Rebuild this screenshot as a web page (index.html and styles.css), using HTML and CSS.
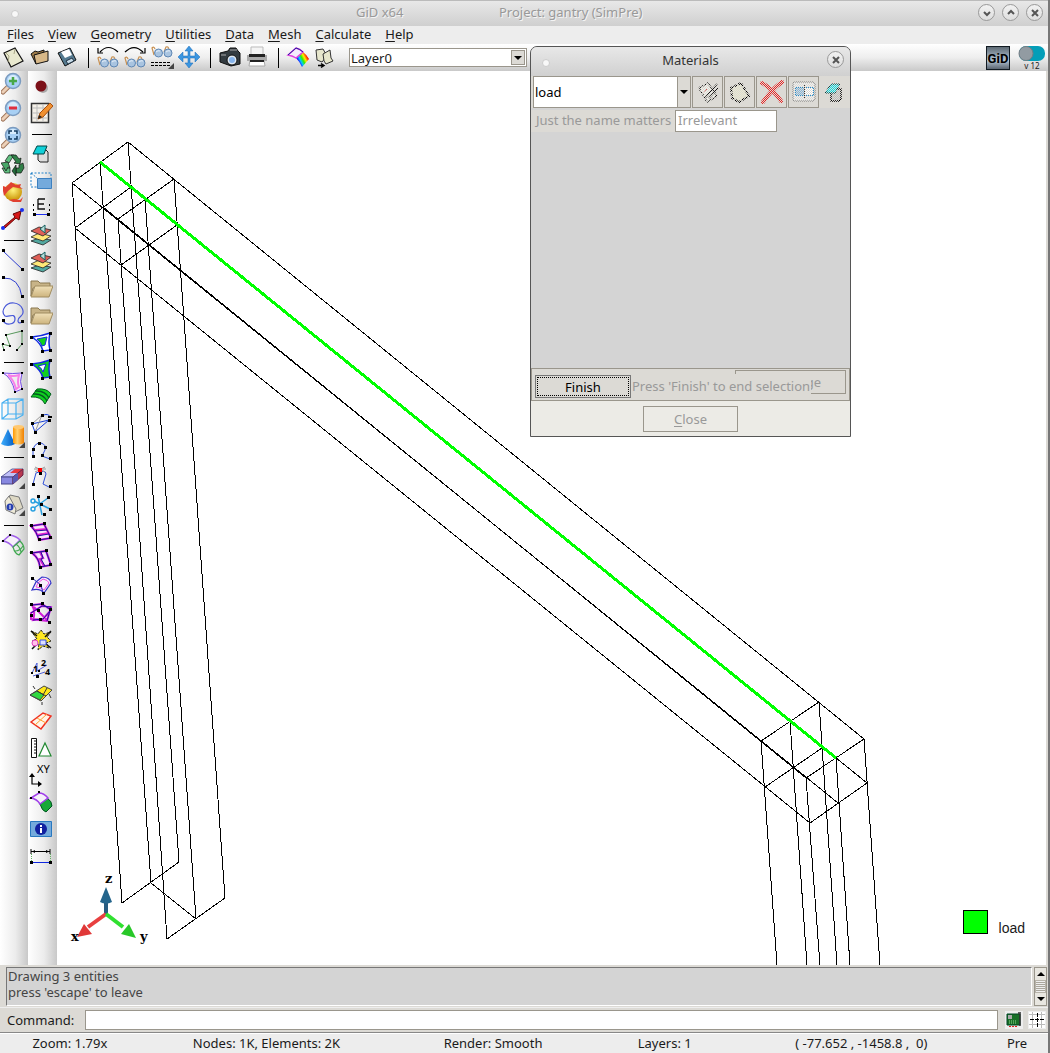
FILE: index.html
```html
<!DOCTYPE html>
<html lang="en">
<head>
<meta charset="utf-8">
<title>GiD x64 - Project: gantry (SimPre)</title>
<link rel="stylesheet" href="styles.css">
</head>
<body>
<svg class="defs" aria-hidden="true">
  <defs>
    <linearGradient id="blue" x1="0" x2="1"><stop offset="0" stop-color="#40b0ff"/><stop offset="1" stop-color="#0058c0"/></linearGradient>
    <linearGradient id="gold" x1="0" x2="1"><stop offset="0" stop-color="#ff9800"/><stop offset=".4" stop-color="#ffd070"/><stop offset="1" stop-color="#f08000"/></linearGradient>
    <linearGradient id="rainbow" x1="0" x2="1" y1="1" y2=".4"><stop offset=".3" stop-color="#20f"/><stop offset=".45" stop-color="#0cf"/><stop offset=".6" stop-color="#3e0"/><stop offset=".75" stop-color="#fe0"/><stop offset=".95" stop-color="#f00"/></linearGradient>
    <linearGradient id="steel" x2="0" y2="1"><stop offset="0" stop-color="#5a6670"/><stop offset=".6" stop-color="#b4c4d4"/><stop offset="1" stop-color="#56606c"/></linearGradient>
    <linearGradient id="tan" x2="0" y2="1"><stop offset="0" stop-color="#f0e0b8"/><stop offset="1" stop-color="#cdb47e"/></linearGradient>
    <radialGradient id="ball" cx=".5" cy=".4" r=".6"><stop offset="0" stop-color="#fff27a"/><stop offset="1" stop-color="#c89000"/></radialGradient>
    <pattern id="stipple" width="2" height="2" patternUnits="userSpaceOnUse"><path fill="#dcdad5" d="M0 0h1v1H0zM1 1h1v1H1z"/></pattern>
  </defs>
  <symbol id="glasses" viewBox="0 0 24 12">
    <path d="M4 9 2 2q2-2 3 1M14 6l2-5q2-1 3 2" fill="none" stroke="#c89050" stroke-width="1.2"/>
    <circle cx="8.500" cy="7" r="4" fill="#a9c4e0" stroke="#5f87b4"/><circle cx="18" cy="7" r="4" fill="#a9c4e0" stroke="#5f87b4"/>
    <path d="M6 6q2-2 4-1M16 6q2-2 4-1" fill="none" stroke="#e6f0fa"/>
  </symbol>
  <symbol id="corner" viewBox="0 0 24 24"><path d="M24 18v6h-6z" fill="#444"/></symbol>
  <symbol id="lens" viewBox="0 0 24 24">
    <path d="m8 14-6 6" stroke="#a0765a" stroke-width="5" stroke-linecap="round"/><path d="m8 14-6 6" stroke="#ecd0b8" stroke-width="3" stroke-linecap="round"/>
    <circle cx="12" cy="9" r="7.500" fill="#a8d0f4" stroke="#7c9cc0" stroke-width="1.500"/><path d="M7 8a5 5 0 0 1 10 0" fill="#d8ecfc"/>
  </symbol>
  <symbol id="layers" viewBox="0 0 24 24">
    <path d="m2 18 8-3 12 2-8 5z" fill="#52a8a0" stroke="#222" stroke-width=".8"/>
    <path d="m2 14 8-4 12 3-8 5z" fill="#ffe878" stroke="#222" stroke-width=".8"/>
    <path d="m2 8 8-4 12 3-8 6z" fill="#e06058" stroke="#222" stroke-width=".8"/>
    <path d="m11 6 5-4v8z" fill="#b8dcd8" stroke="#156060"/>
  </symbol>
  <symbol id="folder" viewBox="0 0 24 24">
    <path d="M2 4h7l2 2h10v5H4l-2 8z" fill="#c8b488" stroke="#8a7850"/><path d="M2 20 6 9h18l-4 11z" fill="url(#tan)" stroke="#a08c60"/>
  </symbol>
  <symbol id="page" viewBox="0 0 24 24"><path d="m3 8 11-5 8 13-12 6z" fill="#e9e9cf" stroke="#111" stroke-width="1.200"/><path d="m5 8 3 3-1 6M14 4l-1 5" stroke="#aaa888" fill="none"/></symbol>
</svg>

<div class="window">
  <header class="titlebar">
    <i class="dot"></i>
    <span class="app-name">GiD x64</span>
    <h1>Project: gantry (SimPre)</h1>
    <div class="window-buttons">
      <button class="round" aria-label="Minimize"><svg viewBox="0 0 16 16"><path d="m5 7 3 3 3-3"/></svg></button>
      <button class="round" aria-label="Maximize"><svg viewBox="0 0 16 16"><path d="m5 9 3-3 3 3"/></svg></button>
      <button class="round" aria-label="Close window"><svg viewBox="0 0 16 16"><path d="m5 5 6 6m0-6-6 6"/></svg></button>
    </div>
  </header>

  <nav class="menubar">
    <a href="#"><u>F</u>iles</a><a href="#"><u>V</u>iew</a><a href="#"><u>G</u>eometry</a><a href="#"><u>U</u>tilities</a><a href="#"><u>D</u>ata</a><a href="#"><u>M</u>esh</a><a href="#"><u>C</u>alculate</a><a href="#"><u>H</u>elp</a>
  </nav>

  <div class="toolbar">
    <button class="tool" aria-label="New"><svg viewBox="0 0 24 24"><use href="#page" width="24" height="24"/></svg></button>
    <button class="tool" aria-label="Open"><svg viewBox="0 0 24 24"><path d="m3 9 4-3 3 1 6-2v3L7 10l1 9z" fill="#a07c48" stroke="#111"/><path d="m6 10 14-4v10L8 19z" fill="#d8b888" stroke="#111"/></svg></button>
    <button class="tool" aria-label="Save"><svg viewBox="0 0 24 24"><path d="m3 8 12-5 6 12-11 6z" fill="#557a90" stroke="#111"/><path d="m6 7 8-3 3 6-7 3z" fill="#fff"/><path d="m11 16 6-3 2 3-6 3z" fill="#c8dce8" stroke="#234"/></svg></button>
    <i class="sep"></i>
    <button class="tool" aria-label="Previous view"><svg viewBox="0 0 24 24"><use href="#glasses" y="11" width="24" height="12"/><path d="M4 7q8-9 18 0M2 3v5h5" fill="none" stroke="#000" stroke-width="1.200"/></svg></button>
    <button class="tool" aria-label="Next view"><svg viewBox="0 0 24 24"><use href="#glasses" y="11" width="24" height="12"/><path d="M2 7q9-9 18 0m2-4v5h-5" fill="none" stroke="#000" stroke-width="1.200"/></svg></button>
    <button class="tool" aria-label="View list"><svg viewBox="0 0 24 24"><use href="#glasses" y="1" width="24" height="12"/><path d="M1 17.500h19M1 20.500h19" stroke="#000" stroke-dasharray="3 1"/><use href="#corner" width="24" height="24"/></svg></button>
    <button class="tool" aria-label="Pan"><svg viewBox="0 0 24 24"><path d="M12 1l4 5h-3v5h5V7l5 5-5 5v-4h-5v5h3l-4 5-4-5h3v-5H6v4l-5-5 5-5v4h5V6H8z" fill="#3c96e0" stroke="#1668b8" stroke-width=".5"/></svg></button>
    <i class="sep"></i>
    <button class="tool" aria-label="Snapshot"><svg viewBox="0 0 24 24"><path d="M2 8 10 6l2-3h6l2 3 2 2v11l-9 2-11-4z" fill="#333b40" stroke="#111"/><path d="M12 5h7M3 10h5" stroke="#aaa"/><circle cx="14" cy="15" r="5" fill="#dfe8f0" stroke="#111"/><circle cx="14" cy="15" r="3" fill="#86b4ec"/></svg></button>
    <button class="tool" aria-label="Print"><svg viewBox="0 0 24 24"><path d="M6 2h12v10H6z" fill="#f4f4f4" stroke="#bbb"/><path d="M2 10h20v6H2z" fill="#aaa"/><path d="M4 9h16v3H4z" fill="#222"/><path d="M5 15h14l1 6H4z" fill="#fff" stroke="#aaa"/><path d="M5 16h14" stroke="#222" stroke-width="2"/></svg></button>
    <i class="sep"></i>
    <button class="tool" aria-label="Render"><svg viewBox="0 0 24 24"><path d="m10 13 7-6q4 3 6 7l-7 8q-2-5-6-9z" fill="url(#rainbow)"/><path d="m2 10 8-7q4 1 7 4l-7 6Q7 11 2 10z" fill="#f4ecfc" stroke="#e040e0" stroke-width="1.500"/><path d="m2 10 8-7q4 1 7 4" fill="none" stroke="#2020a0"/></svg></button>
    <button class="tool" aria-label="Copy pages"><svg viewBox="0 0 24 24"><path d="m3 5 7-1 4 7-5 6-5-2z" fill="#e6e6cc" stroke="#333"/><path d="m10 9 7-4 1 8 2 3-7 3-2-3z" fill="#e6e6cc" stroke="#333"/><path d="M5 20.500h6m-3-2 3 2-3 2" stroke="#000" stroke-width="1.500" fill="none"/></svg></button>
    <label class="layer-pick"><select aria-label="Layer"><option>Layer0</option></select><i class="arrow-box"><i class="arrow"></i></i></label>
    <div class="brand">
      <svg class="gid" viewBox="0 0 24 24"><rect x=".5" y=".5" width="23" height="23" fill="url(#steel)" stroke="#111a22"/><text x="12" y="17" text-anchor="middle" class="gid-text">GiD</text></svg>
      <button class="version" aria-label="Switch version"><svg viewBox="0 0 28 24"><rect x="1" y="0" width="26" height="15" rx="7" fill="#049eb8"/><circle cx="8" cy="7.500" r="7" fill="#929ba2" stroke="#747d84"/></svg><span>v 12</span></button>
    </div>
  </div>

  <main class="workspace">
    <div class="side side-one">
      <button class="tool" aria-label="Zoom in"><svg viewBox="0 0 24 24"><use href="#lens" width="24" height="24"/><path d="M8 9h8M12 5v8" stroke="#48a848" stroke-width="2.500"/></svg></button>
      <button class="tool" aria-label="Zoom out"><svg viewBox="0 0 24 24"><use href="#lens" width="24" height="24"/><path d="M8 9h8" stroke="#e03040" stroke-width="3"/></svg></button>
      <button class="tool" aria-label="Zoom frame"><svg viewBox="0 0 24 24"><use href="#lens" width="24" height="24"/><path d="M8 8V5h3m2 0h3v3m0 2v3h-3m-2 0H8v-3" stroke="#10385c" stroke-width="1.500" fill="none"/></svg></button>
      <button class="tool" aria-label="Redraw"><svg viewBox="0 0 24 24"><g stroke="#111" stroke-width=".7"><path d="m4 8 4-6h5l-5 8z" fill="#60c080"/><path d="m10 2h5l3 4 2-1-1 6-6-1 2-1z" fill="#308048"/><path d="m18 12 4-2 1 5-3 5h-5v-5h3z" fill="#308048"/><path d="m15 12v11l-4-5z" fill="#246c3c"/><path d="M9 15v5H4l-3-5z" fill="#60c080"/><path d="m0 10 7-1 2 6-2-1-2 4-3-5z" fill="#48a868"/></g></svg></button>
      <button class="tool" aria-label="Render ball"><svg viewBox="0 0 24 24"><circle cx="12" cy="12" r="9" fill="url(#ball)"/><path d="m2 6 3 1 5-5 5 3 5-1-1 3 3 2-5-1-5-1-5 4-4 5-1-5zM8 20l5-1 6 1 3-3-2 5H12z" fill="#e04030"/></svg></button>
      <button class="tool" aria-label="Draw vector"><svg viewBox="0 0 24 24"><path d="m2 20 12-10-2-3 8-3-2 9-3-2-11 10z" fill="#d81818" stroke="#600"/><circle cx="2" cy="21" r="2" fill="#1830f0"/><circle cx="21" cy="3" r="2" fill="#1830f0"/></svg></button>
      <i class="sep"></i>
      <button class="tool" aria-label="Line"><svg viewBox="0 0 24 24"><path d="m2 3 19 18" stroke="#3040d0"/><path d="M1 1h3v3H1zM20 20h3v3h-3z"/></svg></button>
      <button class="tool" aria-label="Arc"><svg viewBox="0 0 24 24"><path d="M2 3q16-1 19 19" fill="none" stroke="#3040d0"/><path d="M1 1h3v3H1zM20 20h3v3h-3z"/></svg></button>
      <button class="tool" aria-label="Curve"><svg viewBox="0 0 24 24"><path d="M2 18c2 6 12 5 12-1 0-7-7-1-10-3C-1 9 5 0 13 1c9 1 11 10 7 13-5 4-3 9 1 6" fill="none" stroke="#4858d8" stroke-width="1.200"/><path d="M1 17h3v3H1zM20 18h3v3h-3z"/></svg></button>
      <button class="tool" aria-label="Polyline"><svg viewBox="0 0 24 24"><path d="m3 21-2-6 8 2L5 6l16-4v13l-5 6" fill="none" stroke="#58985c"/><path d="M4 5h2v2H4zM20 1h2v2h-2zM20 14h2v2h-2zM15 20h2v2h-2zM8 16h2v2H8zM1 14h2v2H1zM2 20h2v2H2z"/></svg></button>
      <i class="sep"></i>
      <button class="tool" aria-label="Surface"><svg viewBox="0 0 24 24"><path d="M2 3q10 1 19 0-3 9 0 16l-7 3Q11 8 2 3z" fill="#f8e8fc" stroke="#7850e8"/><path d="M7 5q5 2 11 0-2 8 0 12l-3 2Q13 10 7 5z" fill="#eee" stroke="#f880e8" stroke-width="2"/><path d="M1 2h2v2H1zM20 2h2v2h-2zM13 21h2v2h-2zM20 18h2v2h-2z"/></svg></button>
      <button class="tool" aria-label="Volume"><svg viewBox="0 0 24 24"><path d="m1 6 6-4h15v16l-7 4H1zm0 0h14v16M15 6l7-4M7 2v15h15M7 17l-6 5" fill="none" stroke="#48b0f0" stroke-width="1.200"/></svg></button>
      <button class="tool" aria-label="Solids"><svg viewBox="0 0 24 24"><path d="m7 5 7 15q-7 4-14 0z" fill="url(#blue)"/><path d="M12 3v16q6 3 11 0V3z" fill="url(#gold)"/><ellipse cx="17.500" cy="3" rx="5.500" ry="2" fill="#ffc870"/><use href="#corner" width="24" height="24"/></svg></button>
      <i class="sep"></i>
      <button class="tool" aria-label="Delete"><svg viewBox="0 0 24 24"><path d="m0 12 11-8h11l-10 8z" fill="#c0c0f8" stroke="#448" stroke-width=".8"/><path d="m14 4-5 4h8l5-4z" fill="#e83840"/><path d="M0 12h12v7H0z" fill="#8888e0" stroke="#448"/><path d="m12 12 10-8v6l-10 9z" fill="#b83850" stroke="#624"/><path d="m12 12 5-4v7l-5 4z" fill="#5858b0"/><use href="#corner" width="24" height="24"/></svg></button>
      <button class="tool" aria-label="List"><svg viewBox="0 0 24 24"><path d="m9 3 9 2 4 11-8 4-8-10z" fill="#ddd8c4" stroke="#777"/><path d="m4 9 4-5 7 13-1 5-9-4z" fill="#eeead8" stroke="#777"/><circle cx="9" cy="15" r="3.500" fill="#2840b0"/><path d="M9 13v4" stroke="#fff"/><use href="#corner" width="24" height="24"/></svg></button>
      <i class="sep"></i>
      <button class="tool" aria-label="Generate mesh"><svg viewBox="0 0 24 24"><path d="m2 8 7-6q6 1 10 5l-7 7Q8 9 2 8z" fill="#f6f0fa" stroke="#a060e8" stroke-width="1.500"/><path d="m12 14 7-6q4 4 4 8l-5 6q-4-1-6-8zM15 11q4 3 5 8M14 18q5 0 8-5" fill="none" stroke="#40a850" stroke-width="1.200"/><path d="M1 7h2v2H1zM8 1h2v2H8z"/></svg></button>
    </div>

    <div class="side side-two">
      <button class="tool" aria-label="Point"><svg viewBox="0 0 24 24"><circle cx="14" cy="14" r="5" fill="#aaa"/><circle cx="12" cy="12" r="5.500" fill="#7c1018"/></svg></button>
      <button class="tool" aria-label="Edit notes"><svg viewBox="0 0 24 24"><path d="M2.500 2.500h17v19h-17z" fill="#f4f0e8" stroke="#333" stroke-width="1.500"/><path d="M3 7h16M3 12h16M3 17h16M8 3v18M14 3v18" stroke="#bbb"/><path d="m9 18 2-6L21 2l3 3-10 11z" fill="#f09030" stroke="#a85010"/><path d="m9 18 1-4 3 2z" fill="#222"/></svg></button>
      <i class="sep"></i>
      <button class="tool" aria-label="Layer"><svg viewBox="0 0 24 24"><path d="M9 8h8l2 2v10h-8l-2-2z" fill="#ddd" stroke="#222"/><path d="m4 12 4-8h10l-3 8z" fill="#10d0d8" stroke="#044"/></svg></button>
      <button class="tool" aria-label="Select box"><svg viewBox="0 0 24 24"><path d="M2 4h20v14M2 4v14h6M2 4l6 5" fill="none" stroke="#2080c8" stroke-dasharray="2 1.500"/><path d="M8.500 9.500h14v10h-14z" fill="#74aadc" stroke="#3c80c0"/></svg></button>
      <button class="tool" aria-label="Label entities"><svg viewBox="0 0 24 24"><path d="M9 3v10h7M9 3h7M9 8h6" fill="none" stroke="#111" stroke-width="1.300"/><path d="M5 18.500h14" stroke="#2030f0"/><path d="M4 17h3v3H4zM18 17h3v3h-3zM4 13h1v2H4zM20 13h1v2h-1zM4 8h1v2H4zM20 8h1v2h-1z"/></svg></button>
      <button class="tool" aria-label="Layers to front"><svg viewBox="0 0 24 24"><use href="#layers" width="24" height="24"/></svg></button>
      <button class="tool" aria-label="Layers to back"><svg viewBox="0 0 24 24"><use href="#layers" width="24" height="24"/></svg></button>
      <button class="tool" aria-label="Open layer"><svg viewBox="0 0 24 24"><use href="#folder" width="24" height="24"/></svg></button>
      <button class="tool" aria-label="Open group"><svg viewBox="0 0 24 24"><use href="#folder" width="24" height="24"/></svg></button>
      <button class="tool" aria-label="Inner surface"><svg viewBox="0 0 24 24"><path d="M3 6q10-1 18-4-2 9 0 17l-7 1Q12 12 3 6z" fill="#fff" stroke="#1028e0" stroke-width="1.500"/><path d="m8 8 10-2-2 8-3 1q-1-4-5-7z" fill="#10d020" stroke="#1028e0"/><path d="M1 5h3v3H1zM20 1h3v3h-3zM12 19h3v3h-3zM20 18h3v3h-3z"/></svg></button>
      <button class="tool" aria-label="Outer surface"><svg viewBox="0 0 24 24"><path d="M3 6q10-1 18-4-2 9 0 17l-7 1Q12 12 3 6z" fill="#10d020" stroke="#1028e0" stroke-width="1.500"/><path d="m9 8 8-2-3 8q-2-5-5-6z" fill="#fff" stroke="#1028e0"/><path d="M1 5h3v3H1zM20 1h3v3h-3zM12 19h3v3h-3zM20 18h3v3h-3z"/></svg></button>
      <button class="tool" aria-label="Parallel surfaces"><svg viewBox="0 0 24 24"><path d="m2 12 6-8q10-1 14 5l-6 10Q12 11 2 12z" fill="#10d020" stroke="#045c20"/><path d="M4 9q10-1 14 7M6 6q10-1 14 7" fill="none" stroke="#045c20" stroke-width="1.500"/></svg></button>
      <button class="tool" aria-label="Rotate lines"><svg viewBox="0 0 24 24"><path d="M3 12 20 8 6 20zM13 4q6-4 9 2" fill="none" stroke="#1840d8"/><path d="m3 12 10-9-7 17" fill="none" stroke="#999"/><path d="M2 10h3v3H2zM5 19h3v3H5zM19 7h3v3h-3zM12 2h3v3h-3zM19 4h4v2h-4z"/></svg></button>
      <button class="tool" aria-label="Join lines"><svg viewBox="0 0 24 24"><path d="M4 18V10q3-7 8-6 6 2 4 7l-3 6 8 3" fill="none" stroke="#3050d8"/><path d="M3 16h3v3H3zM3 9h3v3H3zM9 3h3v3H9zM15 7h3v3h-3zM12 15h3v3h-3zM20 18h3v3h-3z"/></svg></button>
      <button class="tool" aria-label="Move end point"><svg viewBox="0 0 24 24"><path d="m4 18 3-11q10-4 10 1l-3 10 6 3" fill="none" stroke="#3050d8"/><path d="M5 3h12M6 1l10 5M6 6l10-5" stroke="#999"/><path d="M9 2h4v4H9z" fill="#f00"/><path d="M3 17h3v3H3zM10 6h3v3h-3zM20 19h3v3h-3z"/></svg></button>
      <button class="tool" aria-label="Split"><svg viewBox="0 0 24 24"><path d="m5 8 16 8M5 15l14-10M9 3l4 19" stroke="#28a0e0" stroke-width="1.500"/><circle cx="4" cy="8" r="2" fill="none" stroke="#28a0e0" stroke-width="1.500"/><circle cx="4" cy="16" r="2" fill="none" stroke="#28a0e0" stroke-width="1.500"/><path d="M8 2h3v3H8zM18 3h3v3h-3zM11 10h3v3h-3zM20 15h3v3h-3zM14 20h3v3h-3z"/></svg></button>
      <button class="tool" aria-label="Divide surface"><svg viewBox="0 0 24 24"><path d="m2 6 13-2 7 14-12 2Q8 12 2 6zm4 4 12-1M8 15l12-2" fill="#f6e8fa" stroke="#e020d0" stroke-width="2.200"/><path d="m2 6 13-2 7 14-12 2Q8 12 2 6zm4 5 12-1M8 16l12-2" fill="none" stroke="#2010a0"/><path d="M1 4h3v3H1zM14 2h3v3h-3zM20 16h3v3h-3zM9 18h3v3H9z"/></svg></button>
      <button class="tool" aria-label="Divide near point"><svg viewBox="0 0 24 24"><path d="m3 6 14-2 5 14-11 2Q10 11 3 6zM11 5l3 6-3 1 4 7" fill="#f6e8fa" stroke="#d020d0" stroke-width="2.200"/><path d="m3 6 14-2 5 14-11 2Q10 11 3 6zM12 5l2 6-2 1 4 7" fill="none" stroke="#2010a0"/><path d="M1 4h3v3H1zM16 2h3v3h-3zM20 16h3v3h-3zM10 19h3v3h-3z"/></svg></button>
      <button class="tool" aria-label="Edit NURBS surface"><svg viewBox="0 0 24 24"><path d="m7 8 6-5q8 0 9 6l-7 10Q11 14 3 16z" fill="#f6f0fa" stroke="#3030c8" stroke-width="1.200"/><path d="m9 9 5-4q5 1 6 4l-5 7q-3-3-8-3z" fill="none" stroke="#f050e0"/><path d="M3 4l9 7 2 8" fill="none" stroke="#3030c8"/><path d="M2 3h3v3H2zM10 10h3v3h-3zM13 18h3v3h-3z"/></svg></button>
      <button class="tool" aria-label="Intersect surfaces"><svg viewBox="0 0 24 24"><path d="m3 4 10-1 9 6-8 9-10 1q3-8-1-15zM2 12l11-7 9 1-4 14-16-2zM5 6l14 14" fill="none" stroke="#d020d8" stroke-width="2"/><path d="m3 4 10-1 9 6-8 9-10 1M2 12l11-7 9 1-4 14" fill="none" stroke="#2010a0"/><path d="M1 2h3v3H1zM12 1h3v3h-3zM1 13h3v3H1zM10 17h3v3h-3zM19 20h3v3h-3zM20 7h3v3h-3zM8 8h3v3H8z"/></svg></button>
      <button class="tool" aria-label="Explode volumes"><svg viewBox="0 0 24 24"><path d="m2 3 7 3 3-4 3 4 7-2-4 5 4 4-5 2 3 5-6-2-5 4 1-6-7-3 5-2z" fill="#ffe820" stroke="#222" stroke-dasharray="3 1"/><path d="m2 3 6 5M22 3l-6 6M3 21l5-5M22 20l-5-4" stroke="#111" stroke-width="1.500"/><circle cx="6" cy="15" r="3" fill="#ffc0e8" stroke="#e040c0"/><path d="M11 12h6v5h-6z" fill="#dde0ff" stroke="#3850e0"/></svg></button>
      <button class="tool" aria-label="Renumber"><svg viewBox="0 0 24 24"><path d="M3 18 8 8v8l10-6M4 21l12-4" fill="none" stroke="#5060d8"/><text x="12" y="11" class="digit">2</text><text x="4" y="17" class="digit">1</text><text x="16" y="20" class="digit">4</text><path d="M2 17h2v2H2zM9 15h2v2H9zM7 20h3v3H7z"/></svg></button>
      <button class="tool" aria-label="Swap normals"><svg viewBox="0 0 24 24"><path d="m1 13 14-9 8 4-11 11z" fill="#ffe818" stroke="#444"/><path d="m1 13 7-4 7 4-4 5z" fill="#30d840" stroke="#444"/><path d="m8 9 9 5M14 13l4-7M6 7l-2-3M20 12l2 4M13 20v3" stroke="#333"/></svg></button>
      <button class="tool" aria-label="Surface patch"><svg viewBox="0 0 24 24"><path d="m2 13 12-9 8 3-10 13z" fill="#fff4e8" stroke="#f03020" stroke-width="1.500"/><path d="m8 9 9 5M6 16l12-11" stroke="#ffa030"/></svg></button>
      <button class="tool" aria-label="Measure"><svg viewBox="0 0 24 24"><path d="M2.500 2.500h5v19h-5zM5 5h2M5 8h2M5 11h2M5 14h2M5 17h2" fill="#fff" stroke="#111"/><path d="m16 7 6 13H10z" fill="#fff" stroke="#208830" stroke-width="1.200"/></svg></button>
      <button class="tool" aria-label="Coordinates"><svg viewBox="0 0 24 24"><path d="M3 12v9h9" fill="none" stroke="#000" stroke-width="1.200"/><path d="m0 14 3-4 3 4zM9 18l4 3-4 3z"/><text x="8" y="10" class="axes-text">XY</text></svg></button>
      <button class="tool" aria-label="Surface render"><svg viewBox="0 0 24 24"><path d="m11 14 7-6q5 3 5 8l-6 6q-4-1-6-8z" fill="#18a838" stroke="#052"/><path d="m2 8 8-5q5 0 9 5l-8 6Q8 9 2 8z" fill="#f6f0fa" stroke="#a040e8" stroke-width="1.500"/><path d="M1 7h2v2H1zM9 1h2v2H9z"/></svg></button>
      <button class="tool" aria-label="Information"><svg viewBox="0 0 24 24"><path d="M1.500 4.500h21v15h-21z" fill="#74aadc" stroke="#2878c0"/><circle cx="12" cy="12" r="6" fill="#1020a0"/><path d="M11 11h2v5h-2zM11 8h2v2h-2z" fill="#fff"/></svg></button>
      <button class="tool" aria-label="Distance"><svg viewBox="0 0 24 24"><path d="M2 7.500h19M2 5v5M21 5v5" stroke="#000"/><path d="M2 18.500h19" stroke="#1028e0"/><path d="M3 7.500 6 6v3zM20 7.500 17 6v3zM1 17h3v3H1zM20 17h3v3h-3z"/><path d="M2.500 10v7M21.500 10v7" stroke="#60b060" stroke-dasharray="1 1"/></svg></button>
    </div>

    <section class="viewport">
      <svg class="model" viewBox="57 71 989 894" preserveAspectRatio="xMinYMin slice">
        <g class="wire">
          <path d="M128 142 864 739M72 183l766 620M75 228l735 595M131 187l736 596"/>
          <path d="m103 207 703 571"/>
          <path d="m72 183 56-41M118 219l56-40M75 228l56-41M121 265l56-40"/>
          <path d="m761 741 58-39M765 787l57-39M806 778l58-39M810 823l57-40"/>
          <path d="m72 183 50 720M100 162l51 721M128 142l51 720M118 219l49 720M145 199l51 720M174 179l51 719"/>
          <path d="m122 903 57-41M167 939l58-41M151 883l45 36"/>
          <path d="m761 741 16 224M790 721l17 244M806 778l14 187M819 702l18 263M836 758l14 207M864 739l16 226"/>
        </g>
        <path class="load-line" d="m100 162 736 596"/>
        <g class="triad">
          <path d="M106 914V895" stroke="#285c80" stroke-width="4"/><path d="m106 887 6 15q-6 3-12 0z" fill="#24658c"/>
          <path d="m106 914-18 13" stroke="#e84040" stroke-width="4"/><path d="m77 937 7-13 8 10z" fill="#e03838"/>
          <path d="m106 914 17 13" stroke="#30e030" stroke-width="4"/><path d="m136 938-7-14-8 10z" fill="#28c828"/>
          <text x="105" y="883">z</text><text x="71" y="941">x</text><text x="140" y="941">y</text>
        </g>
      </svg>
      <div class="legend"><i class="swatch"></i><span>load</span></div>
    </section>
  </main>

  <section class="messages">
    <div class="log">Drawing 3 entities<br>press 'escape' to leave</div>
    <div class="scrollbar"><button aria-label="Scroll up"><i class="arrow up"></i></button><i class="thumb"></i><button aria-label="Scroll down"><i class="arrow"></i></button></div>
  </section>

  <div class="command">
    <label for="command">Command:</label>
    <input id="command" type="text">
    <button class="mini" aria-label="Process"><svg viewBox="0 0 18 18"><path d="M2 3h13v11H2z" fill="#187028" stroke="#042"/><path d="M13 2h3M15 3v12" stroke="#333" stroke-width="1.500"/><path d="M3 4h4v4H3z" fill="#aaa"/><path d="M4 10h8M4 12h8" stroke="#90d890" stroke-dasharray="1 1"/><path d="M4 15.500h9" stroke="#e02020" stroke-dasharray="2 1"/></svg></button>
    <button class="mini" aria-label="Grid"><svg viewBox="0 0 18 18" shape-rendering="crispEdges"><path d="M1 1h16v16H1z" fill="#fff"/><path d="M1 3.500h16M1 13.500h16M4.500 1v16M13.500 1v16" stroke="#bbb"/><path d="M2 8.500h14M9 2v14" stroke="#000" stroke-dasharray="4 1"/></svg></button>
  </div>

  <footer class="status">
    <span>Zoom: 1.79x</span><span>Nodes: 1K, Elements: 2K</span><span>Render: Smooth</span><span>Layers: 1</span><span>( -77.652 , -1458.8 ,&nbsp; 0)</span><span>Pre</span>
  </footer>
</div>

<div class="dialog" role="dialog" aria-labelledby="dialog-title">
  <header class="dialog-title">
    <i class="dot"></i><h2 id="dialog-title">Materials</h2>
    <button class="round" aria-label="Close dialog"><svg viewBox="0 0 16 16"><path d="m5 5 6 6m0-6-6 6"/></svg></button>
  </header>
  <div class="material-bar">
    <label class="material-pick"><select aria-label="Material"><option>load</option></select><i class="arrow-box"><i class="arrow"></i></i></label>
    <button class="material-tool" aria-label="Assign" disabled><svg viewBox="0 0 24 24"><path d="m3 8 9-5 9 13-10 6z" fill="#f2f2ea" stroke="#111" stroke-width="1.500" stroke-dasharray="2 1"/><path d="m8 8 4 4M7 12l4-3" stroke="#c44"/><path d="M21 4 9 18M22 8l-9 10" stroke="#111" stroke-width="1.500"/><path class="stipple" d="M0 0h24v24H0z"/></svg></button>
    <button class="material-tool" aria-label="New material" disabled><svg viewBox="0 0 24 24"><path d="m3 8 10-5 8 13-10 6-7-4z" fill="#e9e9cf" stroke="#000" stroke-width="2" stroke-dasharray="3 1"/><path class="stipple" d="M0 0h24v24H0z"/></svg></button>
    <button class="material-tool" aria-label="Delete material" disabled><svg viewBox="0 0 24 24"><path d="M2 3q10 5 19 18M22 2Q12 9 3 22" fill="none" stroke="#e82020" stroke-width="4" stroke-linecap="round"/><path class="stipple" d="M0 0h24v24H0z"/></svg></button>
    <button class="material-tool" aria-label="Rename material" disabled><svg viewBox="0 0 24 24"><rect x="1" y="2" width="22" height="19" rx="2" fill="#eee" stroke="#777"/><path d="M3.500 7.500h18v8h-18z" fill="#fff" stroke="#208cd0"/><path d="M4 8h8v7H4z" fill="#80b4dc"/><path d="M12.500 5v13" stroke="#333"/><path class="stipple" d="M0 0h24v24H0z"/></svg></button>
    <button class="material-tool flat" aria-label="Import material" disabled><svg viewBox="0 0 24 24"><path d="M9 9h10v10l-2 2H9z" fill="#bbb" stroke="#000" stroke-width="1.500"/><path d="m3 13 6-9h9l-5 9z" fill="#00e0e8" stroke="#033"/><path class="stipple" d="M0 0h24v24H0z"/></svg></button>
  </div>
  <div class="property"><label for="name-value">Just the name matters</label><input id="name-value" type="text" value="Irrelevant" disabled></div>
  <div class="actions">
    <button class="finish">Finish</button>
    <span class="hint">Press 'Finish' to end selection</span>
    <button class="covered" disabled>ge</button>
  </div>
  <div class="closing"><button class="close" disabled><u>C</u>lose</button></div>
</div>
</body>
</html>
```
FILE: styles.css
```css
* { box-sizing: border-box; }

body {
  margin: 0;
  font: 13px/16px "Noto Sans", sans-serif;
  color: #1a1a1a;
  background: #dcdad5;
}

button, input, select { font: inherit; color: inherit; margin: 0; padding: 0; border-radius: 0; }
button { background: none; border: 0; }
a { color: inherit; text-decoration: none; }
h1, h2 { margin: 0; font: inherit; }
u { text-underline-offset: 2px; }
.defs { position: absolute; width: 0; height: 0; }

.window {
  display: flex;
  flex-direction: column;
  min-height: 100vh;
  border-right: 2px solid #777;
}

/* Title bar */
.titlebar {
  display: grid;
  grid-template-columns: 356px 143px 1fr auto;
  align-items: center;
  height: 26px;
  padding: 0 5px 3px 0;
  background: linear-gradient(#e8e8e8, #cfcfcf);
  border-top: 1px solid #bbb;
  color: #999;
  text-shadow: 1px 1px 0 #f4f4f4;
}
.dot { width: 8px; height: 8px; border-radius: 50%; background: #f8f8f8; border: 1px solid #ccc; }
.titlebar .dot { margin: 4px 0 0 11px; }
.window-buttons { display: flex; gap: 7px; }
.round {
  width: 17px;
  height: 17px;
  border-radius: 50%;
  background: linear-gradient(#f2f2f2, #dedede);
  border: 1px solid #999;
  display: grid;
  place-items: center;
}
.round svg { width: 16px; height: 16px; fill: none; stroke: #555; stroke-width: 2; }

/* Menu */
.menubar { display: flex; gap: 14px; padding: 0 7px; height: 18px; background: #ededed; }

/* Toolbars */
.toolbar {
  display: flex;
  align-items: center;
  height: 27px;
  background: linear-gradient(#fff, #eee 50%, #c9c9c9);
}
.tool { width: 27px; height: 27px; padding: 1px; flex: none; display: grid; place-items: start; }
.tool svg { width: 24px; height: 24px; }
.sep { display: grid; place-items: center; flex: none; }
.toolbar .sep { width: 14px; height: 27px; }
.toolbar .sep::before { content: ""; width: 1px; height: 20px; background: #000; }
.side .sep::before { content: ""; width: 20px; height: 1px; background: #000; }

.layer-pick, .material-pick {
  display: flex;
  background: #fff;
  border: 1px solid #9a968c;
}
.layer-pick { width: 178px; height: 19px; margin-left: 10px; }
.layer-pick .arrow-box { margin: 1px; }
select { appearance: none; flex: 1; min-width: 0; border: 0; background: #fff; padding-left: 1px; }
.arrow-box { display: grid; place-items: center; background: #dcdad5; border: 1px solid #9a968c; width: 14px; }
.arrow { border: 4px solid transparent; border-top-color: #000; border-bottom-width: 0; }
.arrow.up { border: 4px solid transparent; border-bottom-color: #000; border-top-width: 0; }
.brand { display: flex; gap: 8px; margin-left: auto; padding-right: 2px; align-items: center; }
.gid { width: 24px; height: 24px; }
.gid-text { font: bold 13px "Liberation Sans Narrow", "Roboto", sans-serif; }
.version { display: flex; flex-direction: column; align-items: center; width: 28px; height: 24px; font-size: 8px; line-height: 8px; }
.version svg { width: 28px; height: 24px; margin-bottom: -8px; flex: none; }

.workspace { display: flex; flex: 1; background: #fff; }
.side { display: flex; flex-direction: column; flex: none; background: linear-gradient(90deg, #fff, #ececec 55%, #c8c8c8); }
.side-one { width: 28px; }
.side-two { width: 29px; padding-top: 2px; }
.side .sep { height: 14px; width: 27px; }
.digit { font: bold 9px "Noto Sans", sans-serif; }
.axes-text { font: 11px "Noto Sans", sans-serif; }

/* Drawing area */
.viewport { position: relative; flex: 1; min-width: 0; border-right: 2px solid #dcdad5; }
.model { position: absolute; inset: 0; width: 100%; height: 100%; }
.wire { fill: none; stroke: #000; stroke-width: 1; shape-rendering: crispEdges; }
.load-line { stroke: #0f0; stroke-width: 3; shape-rendering: crispEdges; }
.triad text { font: bold 13px "DejaVu Serif", serif; }
.legend {
  position: absolute;
  right: 21px;
  bottom: 29px;
  display: flex;
  gap: 11px;
  align-items: flex-end;
  font: 14px/16px "Liberation Sans", sans-serif;
}
.swatch { width: 25px; height: 24px; margin-bottom: 2px; background: #0f0; border: 1px solid #000; }

/* Messages, command line and status */
.messages { display: flex; gap: 2px; height: 43px; padding: 2px 1px 1px 6px; border-bottom: 1px solid #eee; }
.log { flex: 1; padding: 0 1px; background: #d4d4d4; color: #444; border: 1px solid #fff; border-top-color: #777; border-left-color: #777; }
.scrollbar { display: flex; flex-direction: column; width: 13px; background: #b8b4aa; border: 1px solid #9a968c; }
.scrollbar button { height: 12px; display: grid; place-items: center; background: #e8e6e0; flex: none; }
.thumb { flex: 1; margin: 1px; background: repeating-linear-gradient(#eee 0 1px, #aaa69c 1px 2px); }
.command { display: flex; align-items: center; height: 25px; padding: 0 2px 0 7px; border-bottom: 1px solid #888; }
.command label { width: 78px; }
.command input { flex: 1; min-width: 0; height: 20px; background: #fff; border: 1px solid #9a968c; margin-right: 7px; }
.mini { width: 18px; height: 18px; background: #eee; }
.mini + .mini { margin-left: 5px; }
.mini svg { display: block; width: 18px; height: 18px; }
.status { display: grid; grid-template-columns: 140fr 254fr 200fr 144fr 250fr 62fr; height: 20px; text-align: center; background: #ededed; border-top: 1px solid #fff; line-height: 18px; white-space: nowrap; }

/* Materials dialog */
.dialog {
  position: absolute;
  left: 530px;
  top: 46px;
  width: 321px;
  height: 391px;
  display: flex;
  flex-direction: column;
  background: #d4d4d4;
  border: 1px solid #555;
  border-radius: 7px 7px 0 0;
  color: #000;
}
.dialog-title {
  display: grid;
  grid-template-columns: 19px 1fr 24px;
  align-items: center;
  height: 29px;
  padding: 0 6px 4px 11px;
  text-align: center;
  color: #333;
  background: linear-gradient(#e8e8e8, #d0d0d0);
  border-radius: 6px 6px 0 0;
}
.dialog-title .dot { margin-top: 6px; }
.dialog-title .round { justify-self: end; }
.material-bar { display: flex; gap: 1px; padding: 0 2px; height: 32px; background: #dcdad5; }
.material-pick { width: 159px; }
.material-pick .arrow-box { border-width: 0 0 0 1px; width: 13px; }
.material-tool { width: 31px; display: grid; place-items: center; background: #dcdad5; border: 1px solid #9a968c; }
.material-tool.flat { border-color: transparent; width: 28px; }
.material-tool svg { width: 24px; height: 24px; }
.stipple { fill: url(#stipple); }
.property { display: flex; height: 22px; margin-top: 2px; color: #999; }
.property label { width: 144px; padding: 2px 0 0 5px; background: #dcdad5; white-space: nowrap; }
.property input { width: 102px; padding: 0 2px 2px; background: #fff; border: 1px solid #9a968c; }
.actions { position: relative; display: flex; align-items: flex-end; height: 33px; margin-top: auto; padding: 0 3px 2px; background: #dcdad5; border: 1px solid #9a968c; }
.finish { width: 96px; height: 23px; border: 1px solid #777; background: #dcdad5; outline: 1px dotted #000; outline-offset: -3px; }
.hint { position: relative; z-index: 1; width: 180px; height: 24px; padding-left: 1px; line-height: 24px; color: #999; background: #dcdad5; white-space: nowrap; }
.covered { position: absolute; right: 3px; top: 1px; width: 111px; height: 24px; padding-right: 24px; text-align: right; color: #999; border: 1px solid #9a968c; }
.closing { display: flex; justify-content: center; align-items: center; height: 35px; background: #ecebe6; }
.close { width: 95px; height: 26px; color: #999; border: 1px solid #9a968c; }
```
